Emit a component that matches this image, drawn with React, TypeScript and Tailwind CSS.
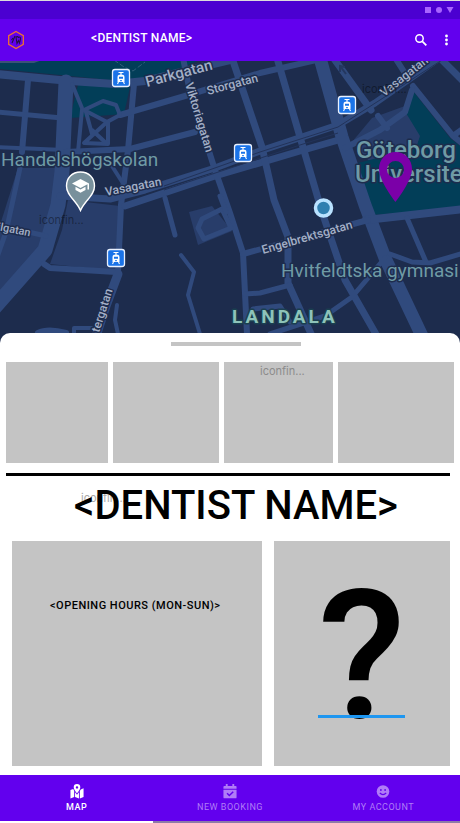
import React from "react";

type Label = { text: string; x: number; y: number; angle: number; size: number };

const roads: { d: string; w: number }[] = [
  { d: "M-4 74 L70 81 L115 84 L145 81 L180 72 L230 60", w: 8 },
  { d: "M28 80 L22 152", w: 6 },
  { d: "M-4 112 L62 118", w: 5 },
  { d: "M-4 147 L64 150", w: 4 },
  { d: "M66 82 L62 172 L58 205 L45 250 L-6 308", w: 15 },
  { d: "M72 84 L82 108", w: 4 },
  { d: "M134 84 L128 150 L121 205 L118 272", w: 6 },
  { d: "M120 115 L185 96 L260 73 L325 58", w: 6 },
  { d: "M66 152 L130 149 L195 132", w: 6 },
  { d: "M110 163 L126 188", w: 4 },
  { d: "M20 168 L6 232 L-4 260", w: 5 },
  { d: "M84 110 L103 101 L116 105 L120 115 L107 122 Z", w: 4 },
  { d: "M107 122 L84 143 L108 144 L108 122", w: 4 },
  { d: "M82 110 L78 152 M86 112 L92 134 M92 130 L106 143", w: 4 },
  { d: "M60 196 L110 199 L145 190 L215 168 L260 151 L338 125 L375 103 L442 56", w: 7 },
  { d: "M125 206 L215 176 L300 151 L342 139", w: 7 },
  { d: "M183 58 L190 92 L215 170 L230 213 L243 253 L245 293 L247 334", w: 6 },
  { d: "M232 58 L262 147 L274 200 L288 237 L288 283 L312 336", w: 7 },
  { d: "M277 58 L300 137 L322 212 L345 280 L377 336", w: 7 },
  { d: "M320 58 L342 137 L365 205 L385 258 L422 336", w: 13 },
  { d: "M332 56 L371 110", w: 7 },
  { d: "M394 56 L408 78", w: 6 },
  { d: "M440 58 L464 82", w: 7 },
  { d: "M413 86 L453 136 L464 128 M453 136 L464 145", w: 6 },
  { d: "M412 90 L405 112 L380 130 L345 148 M378 116 L387 128", w: 6 },
  { d: "M366 220 L464 209", w: 8 },
  { d: "M243 254 L368 220", w: 6 },
  { d: "M407 218 L426 262", w: 5 },
  { d: "M390 254 L412 262 L430 263 L464 253", w: 5 },
  { d: "M385 258 L352 297 L325 316 L270 334", w: 5 },
  { d: "M245 294 L260 293 L290 285", w: 5 },
  { d: "M253 309 L280 306 L290 322", w: 5 },
  { d: "M165 198 L175 235", w: 5 },
  { d: "M181 255 L194 272 L188 295 L200 334", w: 4 },
  { d: "M202 219 L222 209 L231 228 L204 239 L198 228 Z", w: 5 },
  { d: "M220 196 L226 212", w: 5 },
  { d: "M44 264 L50 268 L116 272", w: 6 },
  { d: "M118 274 L106 306 L96 336", w: 9 },
  { d: "M117 305 L115 320 L118 334", w: 4 },
  { d: "M74 334 L74 328 L92 328", w: 4 },
  { d: "M24 231 L46 236", w: 5 },
  { d: "M38 333 Q48 328 66 333", w: 6 },
];

const streetLabels: Label[] = [
  { text: "Parkgatan", x: 147, y: 87, angle: -15, size: 15 },
  { text: "Storgatan", x: 208, y: 95, angle: -15, size: 12 },
  { text: "Viktoriagatan", x: 185, y: 84, angle: 73, size: 12 },
  { text: "Vasagatan", x: 106, y: 196, angle: -11, size: 12 },
  { text: "Vasagatan", x: 384, y: 97, angle: -38, size: 12 },
  { text: "Engelbrektsgatan", x: 263, y: 254, angle: -16, size: 12 },
  { text: "tergatan", x: 99, y: 333, angle: -72, size: 12 },
  { text: "ilgatan", x: -3, y: 230, angle: 11, size: 11 },
];

const tramStops = [
  [121, 78],
  [347, 105],
  [243, 153],
  [116, 258],
];

function Tram({ x, y }: { x: number; y: number }) {
  return (
    <g transform={`translate(${x} ${y})`}>
      <rect x="-8.5" y="-8.5" width="17" height="17" rx="2.5" fill="#1a73e8" stroke="#e8f0fe" strokeWidth="1.3" />
      <path d="M-2.5 -5.5 H2.5 M0 -5.5 V-3" stroke="#fff" strokeWidth="1.2" />
      <path
        fillRule="evenodd"
        fill="#fff"
        d="M-2 -3.3 H2 Q3.5 -3 3.5 -1 V4 H-3.5 V-1 Q-3.5 -3 -2 -3.3 Z M-2 -1.2 V.8 H2 V-1.2 Z M-.8 2 V3.2 H.8 V2 Z"
      />
      <path d="M-2.5 4 L-3.5 6 M2.5 4 L3.5 6" stroke="#fff" strokeWidth="1.1" />
    </g>
  );
}

function CityMap() {
  return (
    <svg
      viewBox="0 61 460 284"
      preserveAspectRatio="xMidYMid slice"
      className="block h-[284px] w-full bg-[#1d2c4d] font-[Roboto,sans-serif]"
      role="img"
      aria-label="Map"
    >
      <g fill="#283d6a">
        <path d="M18 168 H58 L50 232 L38 262 L0 292 V225 Z" />
        <path d="M68 200 L120 206 L116 271 L50 264 L62 230 Z" />
        <path d="M352 142 L372 118 L405 106 L421 135 L416 150 L370 162 Z" />
        <path d="M189 212 L212 206 L232 231 L198 245 Z" />
      </g>
      <g fill="#023e58">
        <path d="M0 60 H200 L176 70 L140 79 L110 80 L60 75 L0 69 Z" />
        <path d="M78 85 L130 87 L124 114 L70 118 Z" />
        <path d="M413 91 L450 138 L460 146 V208 L372 215 L358 163 L416 148 L420 136 L406 113 Z" />
      </g>
      <path d="M0 60 H42 L34 63 H0 Z" fill="#3c5178" />
      <path d="M114 60 L124 67 L133 71 L145 62" fill="none" stroke="#31607a" strokeWidth="1" strokeDasharray="5 2" />
      <g fill="none" stroke="#304a7d" strokeLinecap="round" strokeLinejoin="round">
        {roads.map((r, i) => (
          <path key={i} d={r.d} strokeWidth={r.w} />
        ))}
      </g>
      <g fill="none" stroke="#22335a" strokeWidth="1">
        <path d="M164 186 L260 152 L338 127 L380 100 L442 60" />
        <path d="M164 190 L300 145 L338 133" />
      </g>
      <path d="M340 66 L346 74 M340 72 V66 L345 67" fill="none" stroke="#24375f" strokeWidth="2" />

      <g stroke="#1d2c4d" strokeWidth="3" strokeLinejoin="round" paintOrder="stroke">
        <g fill="#a3afc6" fontWeight="500">
          {streetLabels.map((l, i) => (
            <text key={i} fontSize={l.size} transform={`translate(${l.x} ${l.y}) rotate(${l.angle})`}>
              {l.text}
            </text>
          ))}
        </g>
        <g fill="#6f9ba5">
          <text x="1" y="166" fontSize="19">Handelshögskolan</text>
          <text x="281" y="277" fontSize="19">Hvitfeldtska gymnasi</text>
          <text x="356" y="158" fontSize="24" fontWeight="500">Göteborg</text>
          <text x="355" y="182" fontSize="24" fontWeight="500">Universite</text>
        </g>
        <text x="232" y="323" fontSize="19" fontWeight="700" className="tracking-[3px]" fill="#8ec3b9" stroke="#1a3f50">
          LANDALA
        </text>
      </g>

      {tramStops.map(([x, y]) => (
        <Tram key={x} x={x} y={y} />
      ))}

      <path
        d="M80.500 172 C72 172 66.500 178 66.500 186 C66.500 196 76 200 80.500 210.500 C85 200 94.500 196 94.500 186 C94.500 178 89 172 80.500 172 Z"
        fill="#78909c"
        stroke="#fff"
        strokeWidth="1.4"
      />
      <path d="M80.500 179 L72 183.500 L80.500 188 L87.500 184.300 V189.500 H89 V183.500 Z" fill="#fff" />
      <path d="M75.500 186.700 V190 L80.500 192.700 L85.500 190 V186.700 L80.500 189.400 Z" fill="#fff" />

      <circle cx="323.500" cy="208" r="8" fill="#2f7fb0" stroke="#b9e2ff" strokeWidth="3.500" />

      <path
        fillRule="evenodd"
        fill="#7b00a8"
        d="M395.500 152 C386 152 379 159.500 379 169 C379 181 395.500 202 395.500 202 C395.500 202 412 181 412 169 C412 159.500 405 152 395.500 152 Z M395.500 161 A8.500 8.500 0 1 1 395.500 178 A8.500 8.500 0 1 1 395.500 161 Z"
      />

      <g className="font-[Inter,sans-serif]" fontSize="11" fill="#000" fillOpacity="0.4">
        <text x="39" y="224">iconfin...</text>
        <text x="362" y="93">iconfin...</text>
      </g>
    </svg>
  );
}

function Logo() {
  return (
    <svg width="18" height="20" viewBox="0 0 18 20" fill="none" aria-hidden="true">
      <path d="M9 1.500 L16.300 5.700 V14.300 L9 18.500 L1.700 14.300 V5.700 Z" stroke="#f07030" strokeWidth="1.300" />
      <path d="M5 13 L8 6 M4.500 10 L6 8 M9 7 Q10.500 6 11.500 7.500 Q13.500 6 13.500 9 L12.500 13 L11.500 10.500 L10 13.500 Z" stroke="#241044" strokeWidth="1.100" />
    </svg>
  );
}

function MapIcon() {
  return (
    <svg width="14" height="15" viewBox="0 0 14 16" fill="currentColor" aria-hidden="true">
      <path fillRule="evenodd" d="M7 0 A3.500 3.500 0 0 1 10.500 3.500 C10.500 6 7 10 7 10 C7 10 3.500 6 3.500 3.500 A3.500 3.500 0 0 1 7 0 Z M7 2.300 A1.300 1.300 0 1 0 7 4.900 A1.300 1.300 0 1 0 7 2.300 Z" />
      <path d="M0 6.500 L3 5.300 L4 7.400 V13.800 L0 15.500 Z M4.900 8.900 L7 11.500 L9.100 8.900 V15.500 L4.900 13.800 Z M10 7.400 L11 5.800 L14 4.500 V13.800 L10 15.500 Z" />
    </svg>
  );
}

function CalendarIcon() {
  return (
    <svg width="14" height="15" viewBox="0 0 14 16" fill="currentColor" aria-hidden="true">
      <path d="M2.500 0 H4.500 V2 H9.500 V0 H11.500 V2 H13 Q14 2 14 3 V5 H0 V3 Q0 2 1 2 H2.500 Z" />
      <path fillRule="evenodd" d="M0 6 H14 V14 Q14 15.300 13 15.300 H1 Q0 15.300 0 14 Z M3.300 10.300 L6.300 13.400 L11 8.800 L9.900 7.700 L6.300 11.200 L4.400 9.200 Z" />
    </svg>
  );
}

function SmileIcon() {
  return (
    <svg width="14" height="15" viewBox="0 0 14 15" aria-hidden="true">
      <circle cx="7" cy="7.500" r="6.300" fill="currentColor" />
      <circle cx="4.900" cy="6" r="0.900" fill="#6200ee" />
      <circle cx="9.100" cy="6" r="0.900" fill="#6200ee" />
      <path d="M3.800 9 Q7 12.300 10.200 9" stroke="#6200ee" strokeWidth="1.100" fill="none" />
    </svg>
  );
}

const tabs = [
  { name: "MAP", icon: <MapIcon />, active: true },
  { name: "NEW BOOKING", icon: <CalendarIcon />, active: false },
  { name: "MY ACCOUNT", icon: <SmileIcon />, active: false },
];

export default function App() {
  return (
    <div className="flex min-h-screen flex-col bg-white font-[Roboto,sans-serif] text-black">
      <div className="flex h-[19px] items-center justify-end border-t border-[#dcdcdc] bg-[#4b00d1] pr-1.5">
        <svg width="30" height="8" viewBox="0 0 30 8" fill="#a864ff" aria-hidden="true">
          <path d="M1 1 H7 V7 H1 Z M22.500 1 H29.500 L26 7 Z" />
          <circle cx="15" cy="4" r="3" />
        </svg>
      </div>
      <header className="flex h-[42px] items-center bg-[#6200ee] pr-[9px] pl-[7px] text-white">
        <Logo />
        <p className="ml-[66px] flex-1 pb-1 text-xs leading-4 font-medium tracking-wide">&lt;DENTIST NAME&gt;</p>
        <button type="button" aria-label="Search" className="mr-[15px]">
          <svg width="13" height="13" viewBox="0 0 13 13" fill="none" stroke="currentColor" strokeWidth="1.500" aria-hidden="true">
            <circle cx="5.500" cy="4.500" r="3.700" />
            <path d="M8.300 7.300 L12.300 11.300" strokeWidth="1.800" />
          </svg>
        </button>
        <button type="button" aria-label="More options">
          <svg width="9" height="12" viewBox="0 0 9 12" fill="currentColor" aria-hidden="true">
            <circle cx="4.500" cy="2" r="1.400" />
            <circle cx="4.500" cy="6" r="1.400" />
            <circle cx="4.500" cy="10" r="1.400" />
          </svg>
        </button>
      </header>

      <CityMap />

      <main className="relative -mt-3 flex flex-1 flex-col rounded-t-[10px] bg-white">
        <div className="mx-auto mt-[9px] h-1 w-[130px] translate-x-1.5 bg-[#c4c4c4]" />
        <div className="mt-4 grid h-[101px] grid-cols-[102fr_106fr_109fr_116fr] gap-[5px] px-1.5">
          <div className="bg-[#c4c4c4]" />
          <div className="bg-[#c4c4c4]" />
          <div className="bg-[#c4c4c4] pt-px pl-9 text-[11px] leading-4 text-[#8c8c8c]">
            <span className="font-[Inter,sans-serif]">iconfin...</span>
          </div>
          <div className="bg-[#c4c4c4]" />
        </div>
        <hr className="mt-2.5 mr-2.5 ml-1.5 border-t-[3px] border-black" />
        <div className="relative mt-2 text-center">
          <span className="absolute top-1.5 left-[81px] font-[Inter,sans-serif] text-[11px] leading-4 text-[#a8a8a8]">iconfin...</span>
          <h1 className="relative pl-3 text-[40px] leading-[44px] font-medium">&lt;DENTIST NAME&gt;</h1>
        </div>
        <div className="mt-[13px] mr-2.5 ml-3 grid h-[225px] grid-cols-[249fr_176fr] gap-3">
          <section className="bg-[#c4c4c4] pt-14 pl-[38px] text-[11px] leading-[18px] font-medium tracking-[0.5px]">
            &lt;OPENING HOURS (MON-SUN)&gt;
          </section>
          <section className="flex flex-col items-center bg-[#c4c4c4]">
            <p className="mt-6 h-[150px] text-[180px] leading-[184px] font-medium">?</p>
            <div className="relative h-[3px] w-[87px] bg-[#1e96f0]" />
          </section>
        </div>
      </main>

      <nav className="mt-[9px] flex h-12 bg-[#6200ee] text-[9px] leading-3 font-medium tracking-[0.5px]">
        {tabs.map((t) => (
          <button
            key={t.name}
            type="button"
            className={
              t.active
                ? "flex flex-1 flex-col items-center gap-0.5 border-b-2 border-white pt-[9px] text-white"
                : "flex flex-1 flex-col items-center gap-0.5 border-b-2 border-[#8c7ba8] pt-[9px] font-normal text-[#b07cf7]"
            }
          >
            {t.icon}
            {t.name}
          </button>
        ))}
      </nav>
    </div>
  );
}
